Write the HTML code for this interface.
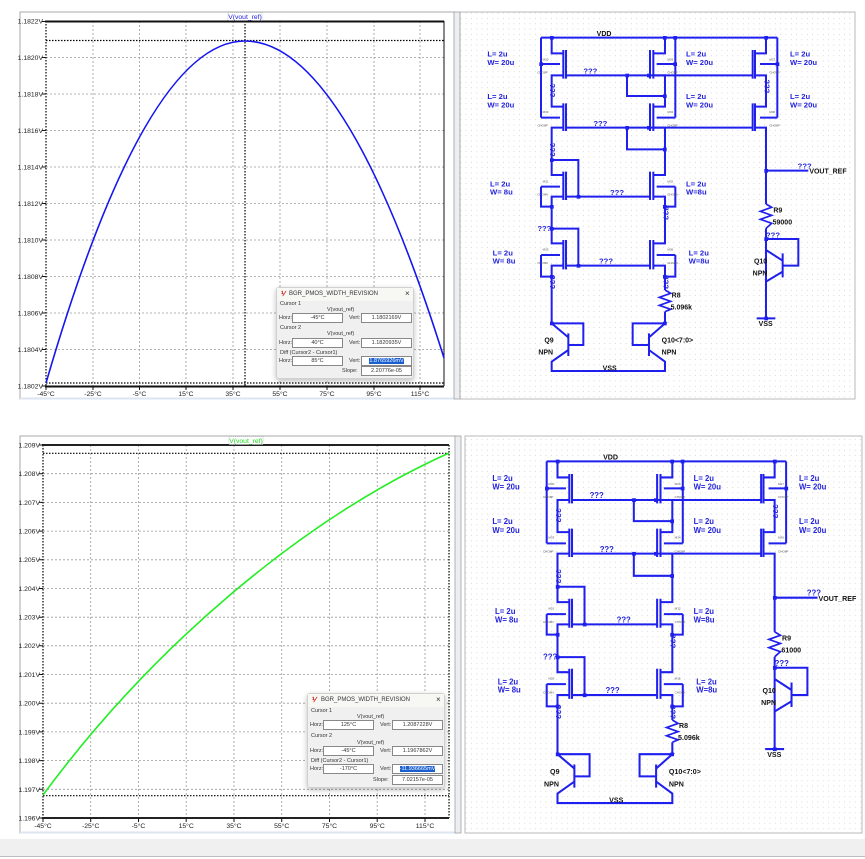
<!DOCTYPE html>
<html><head><meta charset="utf-8"><style>
html,body{margin:0;padding:0;background:#fff;width:865px;height:859px;overflow:hidden;font-family:"Liberation Sans",sans-serif}
.dlg{position:absolute;background:#f0f0f0;border:1px solid #d0d0d0;border-radius:3px;box-shadow:0 2px 6px rgba(0,0,0,.25);font-size:5.5px;color:#333}
.dlg .tb{position:absolute;left:0;right:0;top:0;height:13px;background:#f7f7f3}
.dlg .t{position:absolute;white-space:nowrap}
.dlg .in{position:absolute;background:#fff;border:1px solid #888;height:8px;font-size:5.5px;line-height:8px;text-align:center}
.dlg .sel{background:#1a5fd0;color:#fff}
</style></head><body>
<svg width="865" height="859" style="position:absolute;left:0;top:0" xmlns="http://www.w3.org/2000/svg" font-family="Liberation Sans, sans-serif">
<defs>
<pattern id="dots" width="5.33" height="5.33" patternUnits="userSpaceOnUse"><rect x="2" y="2" width="0.8" height="0.8" fill="#c4c4c4"/></pattern>
<g id="sch" fill="none" stroke="#1f1fee" stroke-width="6">
<path d="M273 113H982M273 113V353M273 192H330M273 353H330M982 113V353M982 192H930M982 353H930M676 113V353M676 192H620M676 353H620"/>
<path d="M305 113V160H340M340 150V236M348 150V236M340 226H305V320H340M340 310V393M348 310V393M340 383H305V525H340M340 515V600M348 515V600M340 590H305V730H340M340 720V808M348 720V808M340 797H305V970"/>
<path d="M645 113V160H610M610 150V236M600 150V236M610 226H645V320H610M610 310V393M600 310V393M610 383H645V525H610M610 515V600M600 515V600M610 590H645V730H610M610 720V808M600 720V808M610 797H645V870M645 935V970"/>
<path d="M948 113V160H915M915 150V236M908 150V236M915 226H948V320H915M915 310V393M908 310V393M915 383H948V612M948 685V960"/>
<path d="M348 226H908M348 383H908M531 226V288H645M531 383V448H645M305 480H385V590M348 590H600M305 686H385V797M348 797H600"/>
<path d="M273 560H330M273 560V620H305M676 560H620M676 560V620H645M273 765H330M273 765V830H305M676 765H620M676 765V830H645"/>
<path d="M645 870L662 880L628 892L662 904L628 916L662 928L645 935" stroke-width="5"/>
<path d="M948 612L965 622L931 634L965 646L931 658L965 670L948 685" stroke-width="5"/>
<path d="M305 970H400V1035H355M355 1000V1068M305 970L355 1012M355 1050L305 1085V1113H645V1085L597 1050M597 1000V1068M597 1012L645 970H548V1035H597"/>
<path d="M948 512H1075M948 717H1045V797H998M998 760V832M948 750L998 782M998 815L948 845M920 955H976"/>
</g>
<g id="schdots" fill="#1f1fee">
<rect x="300" y="108" width="11" height="11"/><rect x="639" y="108" width="11" height="11"/><rect x="670" y="108" width="11" height="11"/><rect x="943" y="108" width="11" height="11"/>
<rect x="268" y="187" width="11" height="11"/><rect x="670" y="187" width="11" height="11"/><rect x="977" y="187" width="11" height="11"/>
<rect x="526" y="221" width="11" height="11"/><rect x="591" y="221" width="11" height="11"/><rect x="639" y="283" width="11" height="11"/>
<rect x="526" y="378" width="11" height="11"/><rect x="591" y="378" width="11" height="11"/><rect x="639" y="443" width="11" height="11"/>
<rect x="300" y="475" width="11" height="11"/><rect x="380" y="585" width="11" height="11"/><rect x="300" y="615" width="11" height="11"/><rect x="639" y="615" width="11" height="11"/>
<rect x="300" y="681" width="11" height="11"/><rect x="380" y="792" width="11" height="11"/><rect x="300" y="825" width="11" height="11"/><rect x="639" y="825" width="11" height="11"/>
<rect x="300" y="965" width="11" height="11"/><rect x="639" y="965" width="11" height="11"/>
<rect x="943" y="507" width="11" height="11"/><rect x="943" y="712" width="11" height="11"/><rect x="943" y="950" width="11" height="11"/>
</g>
<g id="schtxt" font-weight="bold">
<g fill="#2222dd" font-size="23">
<text x="112" y="170">L= 2u</text><text x="112" y="195">W= 20u</text>
<text x="708" y="170">L= 2u</text><text x="708" y="195">W= 20u</text>
<text x="1020" y="170">L= 2u</text><text x="1020" y="195">W= 20u</text>
<text x="112" y="297">L= 2u</text><text x="112" y="322">W= 20u</text>
<text x="708" y="297">L= 2u</text><text x="708" y="322">W= 20u</text>
<text x="1020" y="297">L= 2u</text><text x="1020" y="322">W= 20u</text>
<text x="120" y="560">L= 2u</text><text x="120" y="584">W= 8u</text>
<text x="708" y="560">L= 2u</text><text x="708" y="584">W=8u</text>
<text x="128" y="766">L= 2u</text><text x="128" y="790">W= 8u</text>
<text x="716" y="766">L= 2u</text><text x="716" y="790">W=8u</text>
<text x="400" y="220">???</text><text x="430" y="378">???</text><text x="480" y="585">???</text><text x="447" y="791">???</text>
<text x="1043" y="505">???</text><text x="262" y="693">???</text><text x="948" y="712">???</text>
<text transform="translate(300,250) rotate(90)">???</text><text transform="translate(300,428) rotate(90)">???</text>
<text transform="translate(300,825) rotate(90)">???</text><text transform="translate(640,618) rotate(90)">???</text>
<text transform="translate(640,825) rotate(90)">???</text><text transform="translate(943,238) rotate(90)">???</text>
</g>
<g fill="#111" font-size="21">
<text x="440" y="108">VDD</text><text x="458" y="1111">VSS</text>
<text x="665" y="893">R8</text><text x="662" y="929">5.096k</text>
<text x="283" y="1028">Q9</text><text x="265" y="1064">NPN</text>
<text x="635" y="1028">Q10&lt;7:0&gt;</text><text x="635" y="1064">NPN</text>
<text x="970" y="638">R9</text><text x="912" y="791">Q10</text><text x="908" y="826">NPN</text>
<text x="926" y="978">VSS</text><text x="1078" y="521">VOUT_REF</text>
</g>
<g fill="#555" font-size="9" font-weight="normal">
<text x="278" y="182">M30</text><text x="262" y="220">CHO8P</text><text x="652" y="182">M29</text><text x="652" y="220">CHO8P</text>
<text x="958" y="182">M27</text><text x="958" y="220">CHO8P</text><text x="278" y="339">M33</text><text x="262" y="380">CHO8P</text>
<text x="652" y="339">M34</text><text x="652" y="380">CHO8P</text><text x="958" y="339">M36</text><text x="958" y="380">CHO8P</text>
<text x="278" y="547">M31</text><text x="262" y="586">CHO8N</text><text x="652" y="547">M32</text><text x="652" y="586">CHO8N</text>
<text x="278" y="752">M35</text><text x="262" y="792">CHO8N</text><text x="652" y="752">M36</text><text x="652" y="792">CHO8N</text>
</g>
</g>
</defs>

<rect x="20" y="12" width="436" height="387" fill="#fff" stroke="#a8a8a8" stroke-width="1"/>
<line x1="20" y1="398.5" x2="456" y2="398.5" stroke="#dce6f0" stroke-width="2"/>
<g stroke="#9a9a9a" stroke-width="0.8" stroke-dasharray="2,2">
<path d="M93 21V386M139.5 21V386M186 21V386M233 21V386M280 21V386M327 21V386M374 21V386M420 21V386"/>
<path d="M46 57.5H444M46 94H444M46 130.5H444M46 167H444M46 203.5H444M46 240H444M46 276.5H444M46 313H444M46 349.5H444"/>
</g>
<g stroke="#000" stroke-dasharray="1.5,1.5" stroke-width="1.2">
<path d="M46 40.5H444M46 383H444M245 21V386M46 21V386"/>
</g>
<path d="M45 21.5H444M45 386.5H444" stroke="#111" stroke-width="2"/>
<path d="M444 21V386" stroke="#111" stroke-width="1"/>
<path d="M46 383Q145.5 41 245 41Q344.5 41 444 358" fill="none" stroke="#1515f0" stroke-width="1.6"/>
<g font-size="6.8" fill="#222" text-anchor="end">
<text x="43" y="23.5">1.1822V</text><text x="43" y="60">1.1820V</text><text x="43" y="96.5">1.1818V</text><text x="43" y="133">1.1816V</text>
<text x="43" y="169.5">1.1814V</text><text x="43" y="206">1.1812V</text><text x="43" y="242.5">1.1810V</text><text x="43" y="279">1.1808V</text>
<text x="43" y="315.5">1.1806V</text><text x="43" y="352">1.1804V</text><text x="43" y="388.5">1.1802V</text>
</g>
<g stroke="#111" stroke-width="1"><path d="M42 21.5H46M42 57.5H46M42 94H46M42 130.5H46M42 167H46M42 203.5H46M42 240H46M42 276.5H46M42 313H46M42 349.5H46M42 386H46M46 386V390M93 386V390M139.5 386V390M186 386V390M233 386V390M280 386V390M327 386V390M374 386V390M420 386V390"/></g>
<g font-size="6.8" fill="#222" text-anchor="middle">
<text x="46" y="396">-45°C</text><text x="93" y="396">-25°C</text><text x="139.5" y="396">-5°C</text><text x="186" y="396">15°C</text><text x="233" y="396">35°C</text>
<text x="280" y="396">55°C</text><text x="327" y="396">75°C</text><text x="374" y="396">95°C</text><text x="420" y="396">115°C</text>
</g>
<rect x="228" y="12.5" width="34" height="8" fill="#fff" stroke="#aab" stroke-dasharray="1,1" stroke-width="0.6"/>
<text x="245" y="19" font-size="6.8" fill="#2020e0" text-anchor="middle">V(vout_ref)</text>

<rect x="454" y="12" width="6" height="387" fill="#eceef2" stroke="#a0a0a0" stroke-width="0.8"/>

<rect x="460" y="12" width="395" height="387" fill="url(#dots)" stroke="#a8a8a8" stroke-width="0.8"/>
<g transform="translate(450,0) scale(0.33333)">
<use href="#sch"/><use href="#schdots"/><use href="#schtxt"/>
<text x="968" y="673" font-size="21" font-weight="bold" fill="#111">59000</text>
</g>

<rect x="20" y="436" width="436" height="397" fill="#fff" stroke="#a8a8a8" stroke-width="1"/>
<line x1="20" y1="832.5" x2="456" y2="832.5" stroke="#dce6f0" stroke-width="2"/>
<g stroke="#9a9a9a" stroke-width="0.8" stroke-dasharray="2,2">
<path d="M90.7 445V818M138.5 445V818M186.2 445V818M234 445V818M281.7 445V818M329.5 445V818M377.2 445V818M425 445V818"/>
<path d="M43 473.7H449M43 502.4H449M43 531.1H449M43 559.8H449M43 588.5H449M43 617.2H449M43 645.8H449M43 674.5H449M43 703.2H449M43 731.9H449M43 760.6H449M43 789.3H449"/>
</g>
<g stroke="#000" stroke-dasharray="1.5,1.5" stroke-width="1.2">
<path d="M43 453.3H449M43 795.7H449M43 445V818M449 445V818"/>
</g>
<path d="M42 445H449M42 818H449" stroke="#222" stroke-width="2"/>
<path d="M43 795 C150 650 300 520 449 453" fill="none" stroke="#22ee22" stroke-width="1.6"/>
<g font-size="6.8" fill="#222" text-anchor="end">
<text x="40" y="447.5">1.209V</text><text x="40" y="476">1.208V</text><text x="40" y="505">1.207V</text><text x="40" y="533.5">1.206V</text>
<text x="40" y="562">1.205V</text><text x="40" y="591">1.204V</text><text x="40" y="619.5">1.203V</text><text x="40" y="648">1.202V</text>
<text x="40" y="677">1.201V</text><text x="40" y="705.5">1.200V</text><text x="40" y="734.5">1.199V</text><text x="40" y="763">1.198V</text>
<text x="40" y="792">1.197V</text><text x="40" y="820.5">1.196V</text>
</g>
<g stroke="#111" stroke-width="1"><path d="M39 445H43M39 473.7H43M39 502.4H43M39 531.1H43M39 559.8H43M39 588.5H43M39 617.2H43M39 645.8H43M39 674.5H43M39 703.2H43M39 731.9H43M39 760.6H43M39 789.3H43M39 818H43M43 818V822M90.7 818V822M138.5 818V822M186.2 818V822M234 818V822M281.7 818V822M329.5 818V822M377.2 818V822M425 818V822"/></g>
<g font-size="6.8" fill="#222" text-anchor="middle">
<text x="43" y="828">-45°C</text><text x="90.7" y="828">-25°C</text><text x="138.5" y="828">-5°C</text><text x="186.2" y="828">15°C</text><text x="234" y="828">35°C</text>
<text x="281.7" y="828">55°C</text><text x="329.5" y="828">75°C</text><text x="377.2" y="828">95°C</text><text x="425" y="828">115°C</text>
</g>
<rect x="229" y="436.5" width="34" height="8" fill="#fff" stroke="#aab" stroke-dasharray="1,1" stroke-width="0.6"/>
<text x="246" y="443" font-size="6.8" fill="#22dd22" text-anchor="middle">V(vout_ref)</text>

<rect x="455" y="436" width="6" height="397" fill="#eceef2" stroke="#a0a0a0" stroke-width="0.8"/>

<rect x="465" y="436" width="397" height="397" fill="url(#dots)" stroke="#a8a8a8" stroke-width="0.8"/>
<g transform="translate(454.5,422.75) scale(0.3377,0.3417)">
<use href="#sch"/><use href="#schdots"/><use href="#schtxt"/>
<text x="968" y="673" font-size="21" font-weight="bold" fill="#111">61000</text>
</g>

<rect x="0" y="839" width="865" height="17" fill="#f0f0f0"/>
<line x1="0" y1="856.5" x2="865" y2="856.5" stroke="#bdbdbd" stroke-width="1"/>
</svg>

<div class="dlg" style="left:276px;top:287px;width:136px;height:90px">
<div class="tb"></div>
<div class="t" style="left:4px;top:2px;color:#c22;font-weight:bold;font-size:7px">⅟</div>
<div class="t" style="left:12px;top:3px;font-size:6px">BGR_PMOS_WIDTH_REVISION</div>
<div class="t" style="left:128px;top:1px;font-size:8px">×</div>
<div class="t" style="left:3px;top:13px">Cursor 1</div>
<div class="t" style="left:50px;top:19px">V(vout_ref)</div>
<div class="t" style="left:2px;top:27px">Horz:</div><div class="in" style="left:15px;top:25px;width:49px">-45°C</div>
<div class="t" style="left:72px;top:27px">Vert:</div><div class="in" style="left:84px;top:25px;width:49px">1.1802169V</div>
<div class="t" style="left:3px;top:37px">Cursor 2</div>
<div class="t" style="left:50px;top:43px">V(vout_ref)</div>
<div class="t" style="left:2px;top:52px">Horz:</div><div class="in" style="left:15px;top:50px;width:49px">40°C</div>
<div class="t" style="left:72px;top:52px">Vert:</div><div class="in" style="left:84px;top:50px;width:49px">1.1820935V</div>
<div class="t" style="left:3px;top:62px">Diff (Cursor2 - Cursor1)</div>
<div class="t" style="left:2px;top:70px">Horz:</div><div class="in" style="left:15px;top:68px;width:49px">85°C</div>
<div class="t" style="left:72px;top:70px">Vert:</div><div class="in" style="left:84px;top:68px;width:49px"><span class="sel">1.8765926mV</span></div>
<div class="t" style="left:65px;top:80px">Slope:</div><div class="in" style="left:84px;top:78px;width:49px">2.20776e-05</div>
</div>

<div class="dlg" style="left:307px;top:693px;width:136px;height:93px">
<div class="tb"></div>
<div class="t" style="left:4px;top:2px;color:#c22;font-weight:bold;font-size:7px">⅟</div>
<div class="t" style="left:13px;top:3px;font-size:6px">BGR_PMOS_WIDTH_REVISION</div>
<div class="t" style="left:128px;top:1px;font-size:8px">×</div>
<div class="t" style="left:3px;top:14px">Cursor 1</div>
<div class="t" style="left:49px;top:20px">V(vout_ref)</div>
<div class="t" style="left:2px;top:28px">Horz:</div><div class="in" style="left:15px;top:26px;width:49px">125°C</div>
<div class="t" style="left:72px;top:28px">Vert:</div><div class="in" style="left:84px;top:26px;width:49px">1.2087228V</div>
<div class="t" style="left:3px;top:39px">Cursor 2</div>
<div class="t" style="left:49px;top:46px">V(vout_ref)</div>
<div class="t" style="left:2px;top:54px">Horz:</div><div class="in" style="left:15px;top:52px;width:49px">-45°C</div>
<div class="t" style="left:72px;top:54px">Vert:</div><div class="in" style="left:84px;top:52px;width:49px">1.1967862V</div>
<div class="t" style="left:3px;top:64px">Diff (Cursor2 - Cursor1)</div>
<div class="t" style="left:2px;top:72px">Horz:</div><div class="in" style="left:15px;top:70px;width:49px">-170°C</div>
<div class="t" style="left:72px;top:72px">Vert:</div><div class="in" style="left:84px;top:70px;width:49px"><span class="sel">-11.936665mV</span></div>
<div class="t" style="left:65px;top:83px">Slope:</div><div class="in" style="left:84px;top:81px;width:49px">7.02157e-05</div>
</div>
</body></html>
